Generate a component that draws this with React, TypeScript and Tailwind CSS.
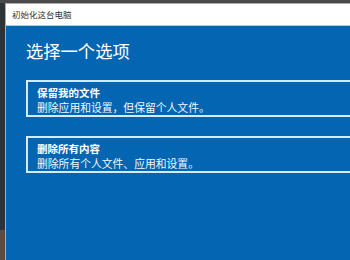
import React from "react";

const font = { fontFamily: '"Microsoft YaHei", "Noto Sans CJK SC", sans-serif' };

function OptionCard({ title, desc }: { title: string; desc: string }) {
  return (
    <div className="border-2 border-r-0 border-[#d6ebfa] h-[37px] pl-[9px] pt-[4px] flex flex-col justify-start">
      <div className="text-white text-[10.5px] leading-[14px] font-bold">{title}</div>
      <div className="text-[#f2f8fd] text-[10.8px] leading-[14px]">{desc}</div>
    </div>
  );
}

export default function App() {
  return (
    <div className="w-[350px] h-[260px] flex flex-col overflow-hidden bg-[#2e3338]" style={font}>
      <div className="h-[3px] bg-[#4a4a4a] shrink-0" />
      <div className="flex flex-1 min-h-0">
        {/* desktop sliver */}
        <div className="w-[5px] flex flex-col shrink-0">
          <div className="flex-1 bg-[#2e3338]" />
          <div className="h-[30px] bg-[#5a4c44]" />
        </div>

        {/* window */}
        <div className="flex-1 flex flex-col border-l border-t border-[#a9acb0] min-w-0">
          <div className="h-[22px] bg-white flex items-center pl-[6px] text-[8.5px] text-[#333] border-b border-[#9fd0f0] shrink-0">
            初始化这台电脑
          </div>
          <div className="flex-1 bg-[#0465b2] pl-[20px]">
            <div className="pt-[14px] text-white text-[17.3px] leading-[22px]">选择一个选项</div>
            <div className="mt-[18px] flex flex-col gap-[19px]">
              <OptionCard title="保留我的文件" desc="删除应用和设置，但保留个人文件。" />
              <OptionCard title="删除所有内容" desc="删除所有个人文件、应用和设置。" />
            </div>
          </div>
        </div>
      </div>
    </div>
  );
}
